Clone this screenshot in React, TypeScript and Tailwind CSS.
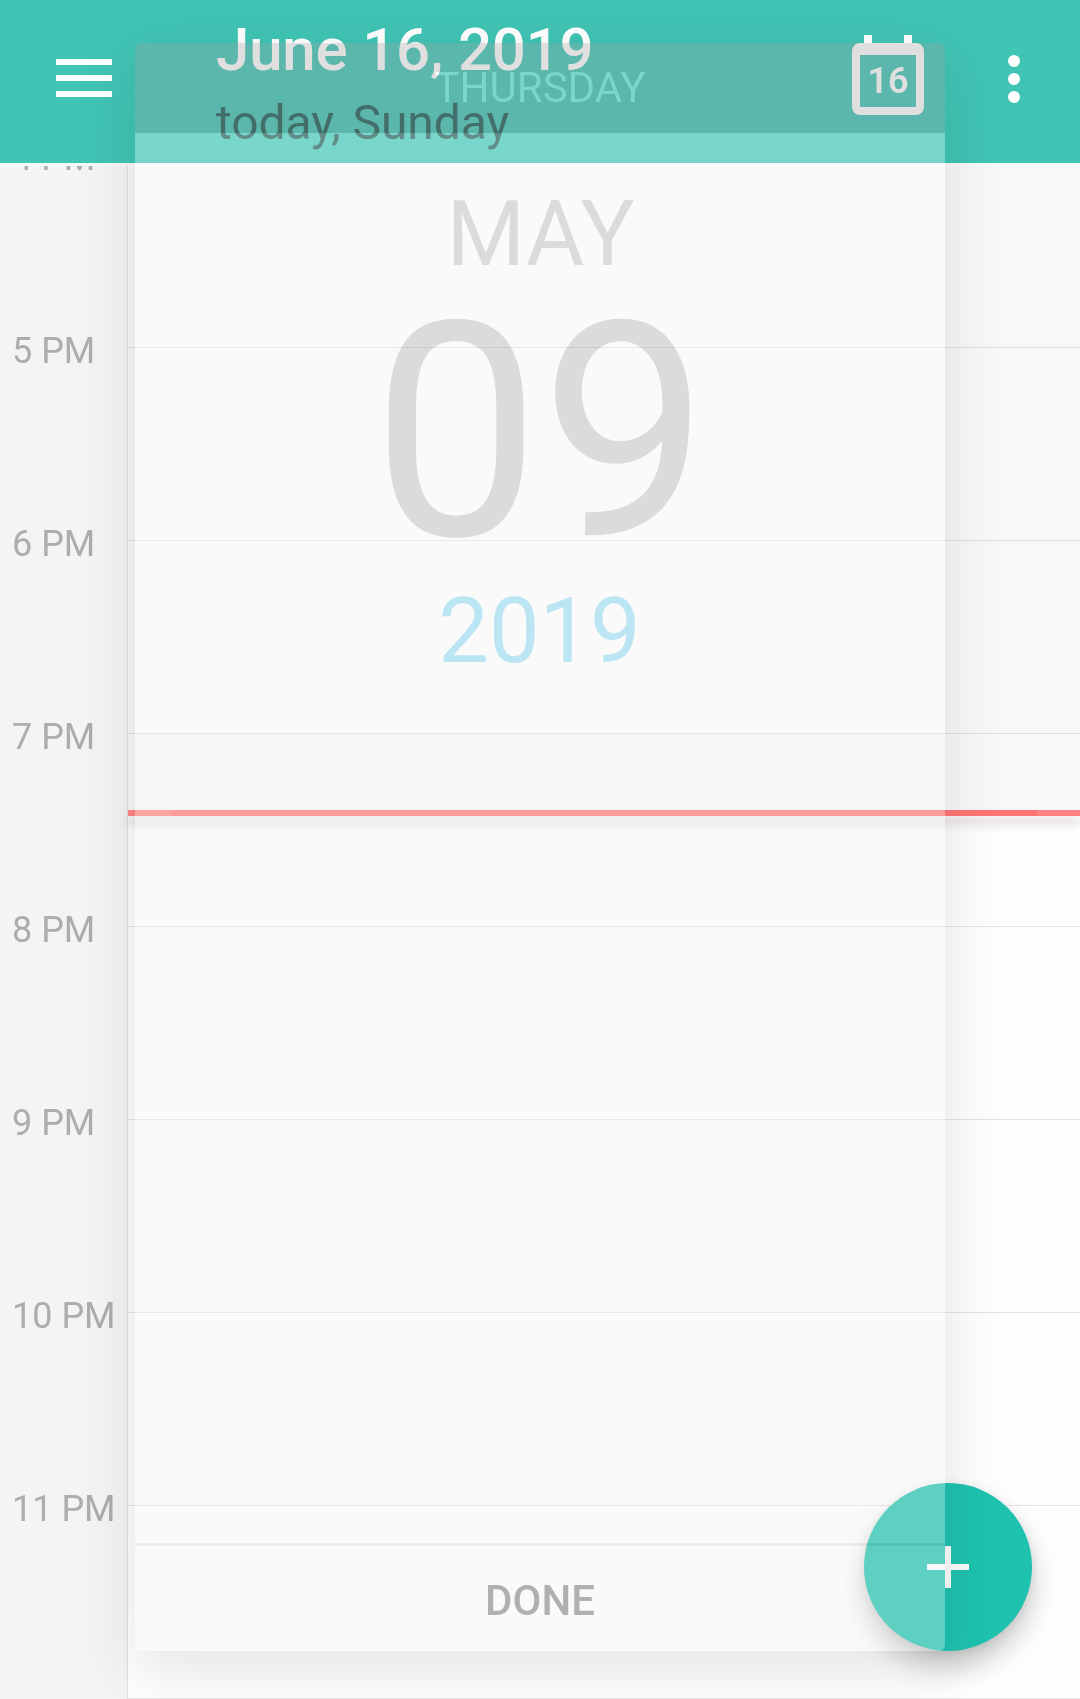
const hours = ['4 PM', '5 PM', '6 PM', '7 PM', '8 PM', '9 PM', '10 PM', '11 PM'];

function TopBar() {
  return (
    <header className="flex h-[163px] shrink-0 items-start bg-[#40c4b4]">
      <div className="ml-14 mt-[59px] flex w-14 flex-col gap-[10px]">
        <span className="h-[6px] bg-white" />
        <span className="h-[6px] bg-white" />
        <span className="h-[6px] bg-white" />
      </div>
      <div className="ml-[104px] mt-[15px] w-[636px] whitespace-nowrap">
        <h1 className="text-[60px] font-medium leading-[70px] tracking-[-0.2px] text-white">June 16, 2019</h1>
        <p className="mt-[9px] text-[48px] leading-[58px] tracking-[-0.07px] text-[#1d5b54]">today, Sunday</p>
      </div>
      <svg className="mt-[35px]" width="72" height="80" viewBox="0 0 72 80">
        <path d="M12 0h8v9h-8zM52 0h8v9h-8z" fill="#fff" />
        <path
          fillRule="evenodd"
          fill="#fff"
          d="M8 8h56a8 8 0 0 1 8 8v56a8 8 0 0 1-8 8H8a8 8 0 0 1-8-8V16a8 8 0 0 1 8-8zM8 20v52h56V20z"
        />
        <text x="36" y="58" textAnchor="middle" fontSize="36" fontWeight="600" fill="#fff">16</text>
      </svg>
      <div className="ml-[84px] mt-[55px] flex flex-col gap-[6px]">
        <span className="size-3 rounded-full bg-white" />
        <span className="size-3 rounded-full bg-white" />
        <span className="size-3 rounded-full bg-white" />
      </div>
    </header>
  );
}

function Timeline() {
  return (
    <div className="relative flex h-[1533px] overflow-hidden">
      <div className="-mt-[14px] w-[127px] shrink-0 bg-[#f4f4f4]">
        {hours.map((h) => (
          <div key={h} className="h-[193px] whitespace-nowrap pl-3 text-[36px] leading-[12px] text-[#adadad]">
            {h}
          </div>
        ))}
      </div>
      <div className="w-px shrink-0 bg-[#dedede]" />
      <div className="flex-1 bg-[linear-gradient(#f8f8f8_644px,#fefefe_644px)]">
        <div className="h-[182px] border-b border-black/10" />
        {hours.slice(1).map((h) => (
          <div key={h} className="h-[193px] border-b border-black/10" />
        ))}
      </div>
      <div className="absolute left-[128px] right-0 top-[644px] h-[6px] bg-[#ff8383] shadow-[0_8px_10px_rgba(70,20,20,0.17)]">
        <div className="ml-[44px] h-full w-[865px] bg-[#ff7474]" />
      </div>
    </div>
  );
}

function DatePanel() {
  return (
    <section className="absolute left-[135px] top-[43px] flex h-[1608px] w-[810px] flex-col overflow-hidden rounded-[6px] text-center">
      <div className="h-[90px] bg-[#999999]/31 pt-[20px] text-[42px] leading-[50px] text-[#1e201f]">
        <span className="mix-blend-plus-lighter">THURSDAY</span>
      </div>
      <div className="h-[600px] bg-white/30">
        <div className="mt-[47px] pl-px text-[90px] leading-[110px] text-black/12">MAY</div>
        <div className="mt-[3px] pl-px text-[300px] leading-[280px] text-black/12">09</div>
        <div className="mt-[4px] pr-px text-[90px] leading-[110px] text-[#bce5f3]">2019</div>
      </div>
      <div className="h-[810px] bg-[#f2f2f2]/30" />
      <div className="h-[3px] bg-[#c8c8c8]/30" />
      <button className="flex-1 bg-[#f3f3f3]/30 pt-[5px] text-[42px] font-medium leading-[50px] text-[#b0b0b0]">DONE</button>
    </section>
  );
}

export default function App() {
  return (
    <main className="relative flex h-[1699px] w-[1080px] flex-col overflow-hidden bg-[#f9f9f9] font-['Roboto',sans-serif]">
      <TopBar />
      <div className="h-[3px] shrink-0 bg-[#f9f9f9]" />
      <Timeline />
      <button className="absolute left-[864px] top-[1483px] size-[168px] rounded-full bg-[#1ec2ae] shadow-[0_16px_28px_rgba(0,0,0,0.22),0_2px_8px_rgba(0,0,0,0.08)]">
        <svg width="168" height="168" viewBox="0 0 168 168">
          <path d="M63 81h42v6H63zM81 63h6v42h-6z" fill="#fbfbfb" />
        </svg>
      </button>
      <div className="pointer-events-none absolute left-[135px] top-[43px] h-[1608px] w-[810px] rounded-[6px] shadow-[0_18px_64px_rgba(0,0,0,0.11)]" />
      <DatePanel />
    </main>
  );
}
